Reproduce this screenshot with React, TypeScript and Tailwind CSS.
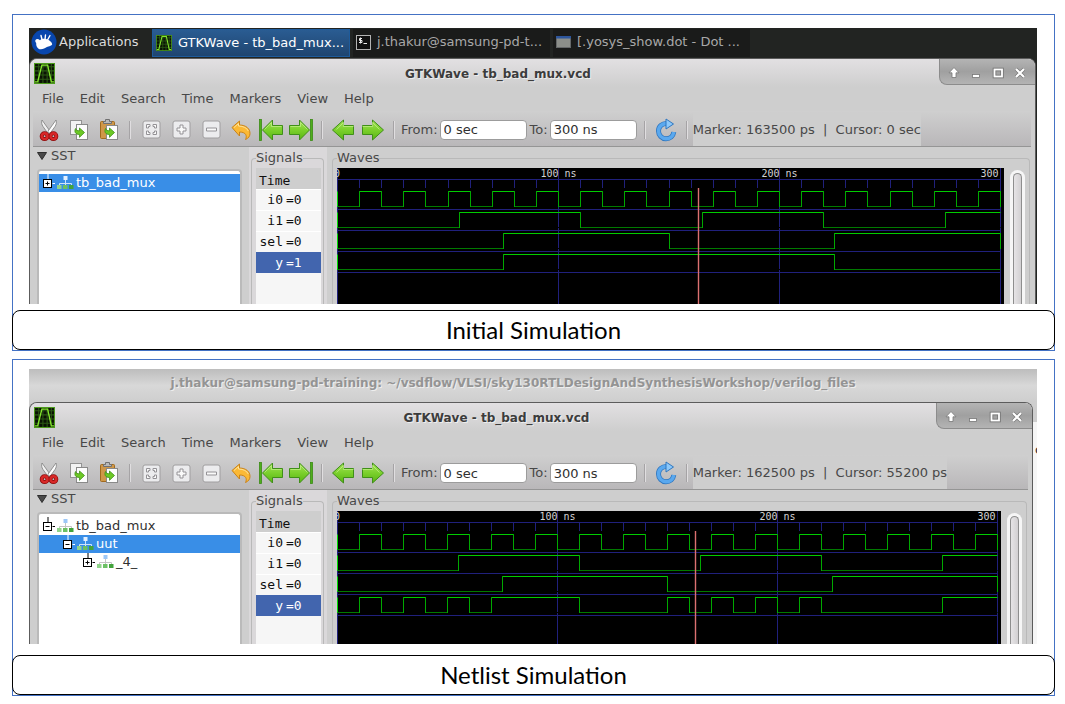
import React from "react";

type Span = [number, number];
interface Signal {
  name: string;
  value: string;
  high: Span[];
  edgeAtEnd?: boolean;
}
interface TreeNode {
  label: string;
  depth: number;
  open?: boolean;
  selected?: boolean;
}

const END = 300;
const clock: Span[] = Array.from({ length: 15 }, (_, i) => [10 + i * 20, 20 + i * 20]);
const i1: Span[] = [[55, 110], [165, 220], [275, 300]];
const sel: Span[] = [[75, 150], [225, 300]];

const initialSignals: Signal[] = [
  { name: "i0", value: "0", high: clock, edgeAtEnd: true },
  { name: "i1", value: "0", high: i1 },
  { name: "sel", value: "0", high: sel, edgeAtEnd: true },
  { name: "y", value: "1", high: [[75, 225]] },
];
const netlistSignals: Signal[] = [
  ...initialSignals.slice(0, 3),
  {
    name: "y",
    value: "0",
    high: [[10, 20], [30, 40], [50, 60], [70, 110], [150, 160], [170, 180], [190, 200], [210, 220], [275, 300]],
  },
];

/* ---------- icons ---------- */

function AppIcon({ className }: { className: string }) {
  return (
    <svg viewBox="0 0 20 20" className={className} aria-hidden="true">
      <rect width="20" height="20" fill="#0a1204" />
      <path d="M4.5 0v20M8.5 0v20M12.5 0v20M16.5 0v20M0 3.5h20M0 7.5h20M0 11.5h20M0 15.5h20" stroke="#2c5a14" fill="none" />
      <rect x=".5" y=".5" width="19" height="19" fill="none" stroke="#4c9a1c" />
      <path d="M1 18h2.500L7.500 2h5.500l3.500 16H19" stroke="#83e52c" strokeWidth="1.300" fill="none" />
    </svg>
  );
}

function MouseLogo() {
  return (
    <svg viewBox="0 0 26 26" className="size-[26px]" aria-hidden="true">
      <circle cx="13" cy="13" r="12.500" fill="#0846ad" />
      <path d="M4.500 11c1-1.500 3-1 4.500.200 1.500-1.400 5-1.900 7.500-.800 2 .900 4.600 2.600 4.700 4.800-.3 1.600-3.400 1.800-5.300 2.900-2.300 1.500-6.200 3.400-8.700 1.300C5 17.700 5.200 15.500 5.200 14c-.8-.8-1.300-2-.7-3z" fill="#fff" />
      <path d="M11 10.500L10 6.500M14 10.500l.500-4.500M16.500 11L19 6.500" stroke="#fff" strokeWidth="1.400" strokeLinecap="round" />
    </svg>
  );
}

function Arrow({ dir, bar }: { dir: "left" | "right"; bar?: boolean }) {
  const id = `arrow-${dir}-${bar ? "bar" : "plain"}`;
  return (
    <svg viewBox="0 0 26 24" className="h-6 w-[26px]" aria-hidden="true">
      <defs>
        <linearGradient id={id} x1="0" y1="0" x2="0" y2="1">
          <stop offset="0" stopColor="#a4e45a" />
          <stop offset=".5" stopColor="#7bd02c" />
          <stop offset="1" stopColor="#58b412" />
        </linearGradient>
      </defs>
      <g transform={dir === "left" ? undefined : "matrix(-1 0 0 1 26 0)"}>
        {bar && <rect x="1.500" y="1.500" width="2" height="21" fill="#4fae1c" stroke="#3b8a16" strokeWidth=".8" />}
        <path
          d={bar ? "M4.500 12L14.500 2v5.500h10v9h-10V22z" : "M2.500 12L13.500 2v5.500h10v9h-10V22z"}
          fill={`url(#${id})`}
          stroke="#3f8f18"
          strokeLinejoin="round"
        />
        <path d="M6.500 11.500l7-7v4h10" stroke="#c4f08a" strokeOpacity=".7" fill="none" />
      </g>
    </svg>
  );
}

function Scissors() {
  return (
    <svg viewBox="0 0 20 24" className="h-6 w-5" aria-hidden="true">
      <path d="M3 2c-.8 2.500-.3 4.500 1 6.500l5 7 2.200-2z" fill="#f1f1f1" stroke="#7d7d7d" strokeWidth=".8" />
      <path d="M17 2c.8 2.500.3 4.500-1 6.500l-5 7-2.200-2z" fill="#fff" stroke="#7d7d7d" strokeWidth=".8" />
      <circle cx="5.600" cy="18.200" r="2.900" fill="none" stroke="#8e0c0c" strokeWidth="4" />
      <circle cx="14.400" cy="18.200" r="2.900" fill="none" stroke="#8e0c0c" strokeWidth="4" />
      <circle cx="5.600" cy="18.200" r="2.900" fill="none" stroke="#d82828" strokeWidth="2.400" />
      <circle cx="14.400" cy="18.200" r="2.900" fill="none" stroke="#d82828" strokeWidth="2.400" />
    </svg>
  );
}

const greenHook = "M10.500 9.500c-1.500 3.500 0 6 4 6v2.800l5-4.800-5-4.500v2.800c-2.200 0-3.300-.5-4-2.300z";

function CopyIcon() {
  return (
    <svg viewBox="0 0 22 24" className="h-6 w-[22px]" aria-hidden="true">
      <rect x="2.500" y="2.500" width="11" height="14" fill="#f3f3f3" stroke="#939393" />
      <rect x="8.500" y="6.500" width="11" height="15" fill="#fdfdfd" stroke="#8a8a8a" />
      <path d={greenHook} transform="translate(-3 1)" fill="#6cc824" stroke="#3f8f18" strokeWidth=".8" />
    </svg>
  );
}

function PasteIcon() {
  return (
    <svg viewBox="0 0 22 24" className="h-6 w-[22px]" aria-hidden="true">
      <rect x="2.500" y="3.500" width="14" height="17" rx="1" fill="#cf9748" stroke="#a06a1e" />
      <path d="M5.500 5.500v-2h2v-2h4v2h2v2z" fill="#b9b9b9" stroke="#707070" />
      <rect x="8.500" y="7.500" width="11" height="14" fill="#fdfdfd" stroke="#8a8a8a" />
      <path d={greenHook} transform="translate(-3 1)" fill="#6cc824" stroke="#3f8f18" strokeWidth=".8" />
    </svg>
  );
}

function ZoomIcon({ kind }: { kind: "fit" | "in" | "out" }) {
  const shape = {
    fit: "M4.500 8V4.500H8v2H6.500V8zM11 4.500h3.500V8h-2V6.500H11zM4.500 11v3.500H8v-2H6.500V11zM11 14.500h3.500V11h-2v1.500H11z",
    in: "M8 5h3v3h3v3h-3v3H8v-3H5V8h3z",
    out: "M4.500 8h10v3h-10z",
  }[kind];
  return (
    <svg viewBox="0 0 19 19" className="size-[19px]" aria-hidden="true">
      <rect x="1" y="1" width="17" height="17" rx="2" fill="#ececee" stroke="#a09ea0" />
      <path d={shape} fill="#fafafa" stroke="#949296" />
    </svg>
  );
}

function UndoIcon() {
  return (
    <svg viewBox="0 0 20 22" className="h-[22px] w-5" aria-hidden="true">
      <path
        d="M1 8.500L8.500 2v4c6.500.200 10.500 3.500 10.500 8.500 0 2.500-1.500 4.800-4.500 6 1.800-3.500.500-7.500-6-7.500v4z"
        fill="#fbb936"
        stroke="#c9831a"
        strokeLinejoin="round"
      />
      <path d="M3 8.500l4.500-4V7c5 .2 8.500 2 9.800 5" fill="none" stroke="#ffe49a" />
    </svg>
  );
}

function ReloadIcon() {
  return (
    <svg viewBox="0 0 22 24" className="h-6 w-[22px]" aria-hidden="true">
      <path d="M12.500 5.500C7 5 3.500 8.500 3.500 13c0 4.200 3.300 7.700 7.500 7.700s7.200-2.700 7.800-6.700" fill="none" stroke="#2f76bf" strokeWidth="5" />
      <path d="M12.500 5.500C7 5 3.500 8.500 3.500 13c0 4.200 3.300 7.700 7.500 7.700s7.200-2.700 7.800-6.700" fill="none" stroke="#5aa8ee" strokeWidth="3.400" />
      <path d="M11 1l7.500 5L11 11z" fill="#8cc8fa" stroke="#2f76bf" strokeLinejoin="round" />
    </svg>
  );
}

function HierarchyIcon({ light }: { light?: boolean }) {
  return (
    <svg viewBox="0 0 17 14" className="h-3.5 w-[17px]" aria-hidden="true">
      <path d="M8.500 4v5M2.500 9.500V7.500h12v2" fill="none" stroke={light ? "#cfe3fa" : "#c4c4c4"} />
      <rect x="6.500" y="0" width="4" height="4" fill={light ? "#e3f0ff" : "#9cc7f7"} />
      <rect x="0" y="9" width="4.500" height="4" fill="#8fd48a" />
      <rect x="6" y="9" width="4.500" height="4" fill="#6cc064" />
      <rect x="12" y="9" width="4.500" height="4" fill="#43a33c" />
    </svg>
  );
}

function Expander({ open, light }: { open?: boolean; light?: boolean }) {
  return (
    <svg viewBox="0 0 12 18" className="h-[18px] w-3" aria-hidden="true">
      <path d="M5 0v5M9.500 9.500H12" stroke={light ? "#fff" : "#000"} fill="none" />
      <rect x=".5" y="5.500" width="8" height="8" fill="#fff" stroke="#000" />
      <path d={open ? "M2.500 9.500h4" : "M2.500 9.500h4M4.500 7.500v4"} stroke="#000" fill="none" />
    </svg>
  );
}

/* ---------- window parts ---------- */

function WindowControls() {
  const shapes: [string, React.ReactNode][] = [
    ["Roll up", <path key="u" d="M7 1.500L12 6.800H9v4.700H5V6.800H2z" fill="#fff" stroke="#777" strokeWidth=".8" />],
    ["Minimize", <rect key="m" x="3.500" y="8.500" width="7" height="3" fill="#fff" stroke="#777" strokeWidth=".8" />],
    [
      "Maximize",
      <g key="x" fill="none">
        <rect x="3.500" y="3.500" width="7.500" height="7" stroke="#777" strokeWidth="3.600" />
        <rect x="3.500" y="3.500" width="7.500" height="7" stroke="#fff" strokeWidth="1.800" />
      </g>,
    ],
    [
      "Close",
      <g key="c" fill="none">
        <path d="M3 3l8 8M11 3l-8 8" stroke="#777" strokeWidth="3.400" />
        <path d="M3 3l8 8M11 3l-8 8" stroke="#fff" strokeWidth="2.200" />
      </g>,
    ],
  ];
  return (
    <div className="flex h-[26px] w-24 items-center gap-2 rounded-bl-lg border-b border-l border-[#8c8c8c] bg-linear-to-b from-[#b4b4b4] via-[#a0a0a0] to-[#b4b4b4] pt-0.5 pl-[7px]">
      {shapes.map(([label, shape]) => (
        <button key={label} type="button" aria-label={label} className="size-3.5">
          <svg viewBox="0 0 14 14" className="size-3.5">
            {shape}
          </svg>
        </button>
      ))}
    </div>
  );
}

function ToolButton({ label, children }: { label: string; children: React.ReactNode }) {
  return (
    <button type="button" aria-label={label} className="flex w-[30px] shrink-0 items-center justify-center">
      {children}
    </button>
  );
}

function Separator() {
  return (
    <div className="flex w-3 shrink-0 items-center justify-center">
      <div className="h-[18px] w-0.5 border-l border-[#a5a3a5] bg-[#e0dee0]" />
    </div>
  );
}

function TimeField({ label, id, value }: { label: string; id: string; value: string }) {
  return (
    <div className="flex items-center gap-0.5">
      <label htmlFor={id}>{label}</label>
      <input
        id={id}
        defaultValue={value}
        className="h-5 w-[87px] rounded-sm border border-[#9c9c9c] bg-white px-[3px] text-[#303030] outline-none"
      />
    </div>
  );
}

function Toolbar({ id, status, className }: { id: string; status: string; className: string }) {
  return (
    <div className={`mr-1 ml-[3px] flex shrink-0 border-b border-[#959595] bg-linear-to-b from-[#cfcfcf] to-[#b9b7b9] pt-0.5 pl-px ${className}`}>
      <ToolButton label="Cut"><Scissors /></ToolButton>
      <ToolButton label="Copy"><CopyIcon /></ToolButton>
      <ToolButton label="Paste"><PasteIcon /></ToolButton>
      <Separator />
      <ToolButton label="Zoom fit"><ZoomIcon kind="fit" /></ToolButton>
      <ToolButton label="Zoom in"><ZoomIcon kind="in" /></ToolButton>
      <ToolButton label="Zoom out"><ZoomIcon kind="out" /></ToolButton>
      <ToolButton label="Undo zoom"><UndoIcon /></ToolButton>
      <ToolButton label="Go to start"><Arrow dir="left" bar /></ToolButton>
      <ToolButton label="Go to end"><Arrow dir="right" bar /></ToolButton>
      <Separator />
      <ToolButton label="Previous edge"><Arrow dir="left" /></ToolButton>
      <ToolButton label="Next edge"><Arrow dir="right" /></ToolButton>
      <Separator />
      <div className="flex items-center gap-[3px] pl-px">
        <TimeField label="From:" id={`${id}-from`} value="0 sec" />
        <TimeField label="To:" id={`${id}-to`} value="300 ns" />
      </div>
      <div className="flex pl-0.5">
        <Separator />
        <ToolButton label="Reload"><ReloadIcon /></ToolButton>
        <Separator />
      </div>
      <div className="flex items-center bg-[#cecece] whitespace-pre">{status}</div>
    </div>
  );
}

function Waves({ signals, pxPerNs, marker }: { signals: Signal[]; pxPerNs: number; marker: number }) {
  const x = (ns: number) => Math.round(ns * pxPerNs) + 0.5;
  const last = x(END);
  return (
    <svg className="block h-[136px]" width={last + 3.5} height="136" role="img" aria-label="Signal waveforms">
      <g stroke="#20207c" fill="none">
        <path d={`M0 11.5H${last}`} />
        {Array.from({ length: 29 }, (_, i) => (
          <path key={i} d={`M${x((i + 1) * 10)} 12V20`} />
        ))}
        {[0, 100, 200, 300].map((t) => (
          <path key={t} d={`M${x(t)} 0V136`} />
        ))}
        {signals.map((s, i) => (
          <path key={s.name} d={`M0 ${41.5 + i * 21}H${last}`} />
        ))}
      </g>
      {signals.map((s, i) => {
        const top = 23.5 + i * 21;
        const low = top + 15;
        const edges = s.high.flat().filter((t) => t < END);
        if (s.edgeAtEnd) edges.push(END);
        return (
          <g key={s.name} fill="none">
            <path d={`M0 ${low}H${last}`} stroke="#007a00" />
            {s.high.map(([a, b]) => (
              <g key={a}>
                <path d={`M${x(a)} ${low}H${x(b)}`} stroke="#000" />
                <path d={`M${x(a)} ${top}H${x(b)}`} stroke="#00cc00" />
              </g>
            ))}
            <path d={`M.5 ${top}V${low}`} stroke="#00dc00" />
            {edges.map((t) => (
              <path key={t} d={`M${x(t)} ${top - 0.5}V${low + 0.5}`} stroke="#00a800" />
            ))}
          </g>
        );
      })}
      <path d={`M${x(marker)} 20V136`} stroke="#dc7070" strokeWidth="1.4" />
      <g className="fill-[#d4d4d4] font-['DejaVu_Sans_Mono',monospace] text-[10px]">
        <text x="-3" y="9">0</text>
        <text x={x(100)} y="9" textAnchor="middle">100 ns</text>
        <text x={x(200)} y="9" textAnchor="middle">200 ns</text>
        <text x={last - 2} y="9" textAnchor="end">300</text>
      </g>
    </svg>
  );
}

function Frame({ title, className, children }: { title: string; className: string; children: React.ReactNode }) {
  return (
    <fieldset className={`min-w-0 rounded-t border border-b-0 border-[#b9b9b9] ${className}`}>
      <legend className="h-5 leading-5">{title}</legend>
      {children}
    </fieldset>
  );
}

interface GtkWaveProps {
  id: string;
  status: string;
  tree: TreeNode[];
  signals: Signal[];
  pxPerNs: number;
  marker: number;
  toolbarClass: string;
}

function GtkWave({ id, status, tree, signals, pxPerNs, marker, toolbarClass }: GtkWaveProps) {
  return (
    <section className="flex min-h-0 flex-1 flex-col overflow-hidden rounded-t-lg border border-b-0 border-[#5c5c5c] bg-[#cecece] text-[#484848]">
      <header className="flex h-7 shrink-0 bg-linear-to-b from-[#e2e0e2] to-[#cecece]">
        <div className="flex flex-1 items-center pl-1">
          <AppIcon className="size-[21px]" />
          <h2 className="flex-1 pt-0.5 pl-0.5 text-center text-[12px] font-bold text-[#3c3c3c] [text-shadow:1px_1px_0_#eee]">
            GTKWave - tb_bad_mux.vcd
          </h2>
        </div>
        <WindowControls />
      </header>
      <nav className="flex h-6 shrink-0 items-center gap-4 pl-3">
        {["File", "Edit", "Search", "Time", "Markers", "View", "Help"].map((m) => (
          <button key={m} type="button">{m}</button>
        ))}
      </nav>
      <Toolbar id={id} status={status} className={toolbarClass} />
      <div className="flex min-h-0 flex-1">
        <div className="flex w-[219px] shrink-0 flex-col px-[7px]">
          <div className="flex h-[22px] items-center gap-1 pb-1">
            <svg viewBox="0 0 10 8" className="h-2 w-2.5" aria-hidden="true">
              <path d="M.5.5h9L5 7.500z" fill="#4a4a4a" stroke="#2e2e2e" />
            </svg>
            SST
          </div>
          <ul className="flex-1 rounded-t-sm border-2 border-b-0 border-[#bababa] bg-white pt-[3px]">
            {tree.map((n) => (
              <li key={n.label} className={`flex h-[18px] items-center ${n.selected ? "bg-[#398ee7] text-white" : "text-[#303030]"}`}>
                <span className="flex items-center gap-0.5 pl-1" style={{ marginLeft: n.depth * 20 }}>
                  <Expander open={n.open} light={n.selected} />
                  <HierarchyIcon light={n.selected} />
                  {n.label}
                </span>
              </li>
            ))}
          </ul>
        </div>
        <div className="flex w-[78px] shrink-0 bg-[#dad8da] pt-px pr-[3px] pl-0.5">
          <Frame title="Signals" className="w-full pr-0.5 pl-1">
            <div className="h-full bg-[#f6f6f6] font-['DejaVu_Sans_Mono',monospace] text-[#101010]">
              <div className="h-[21px] bg-[#cecece] pt-[5px] pl-[3px] leading-4">Time</div>
              {signals.map((s) => (
                <div
                  key={s.name}
                  className={`flex h-[21px] items-center gap-[3px] border-t pl-[3px] ${
                    s.name === "y" ? "border-[#4265ae] bg-[#4265ae] text-white" : "border-white"
                  }`}
                >
                  <span className="w-6 text-right">{s.name}</span>
                  <span>={s.value}</span>
                </div>
              ))}
            </div>
          </Frame>
        </div>
        <div className="flex min-w-0 flex-1 pt-px pr-[5px] pl-[5px]">
          <Frame title="Waves" className="w-full px-1">
            <div className="flex h-full gap-1.5">
              <div className="min-w-0 flex-1 overflow-hidden bg-black">
                <Waves signals={signals} pxPerNs={pxPerNs} marker={marker} />
              </div>
              <div className="mt-0.5 w-[15px] rounded-t-full bg-[#f6f6f6] px-[3px] pt-[3px]">
                <div className="h-full rounded-t-full border border-b-0 border-[#8e8e8e] bg-linear-to-r from-[#e6e4e6] to-[#d2d0d2]" />
              </div>
            </div>
          </Frame>
        </div>
      </div>
    </section>
  );
}

function Taskbar() {
  return (
    <div className="flex h-[30px] shrink-0 items-center bg-[#222422] text-[#dcdcdc]">
      <button type="button" className="flex w-[123px] items-center gap-0.5 pb-0.5 pl-0.5">
        <MouseLogo />
        Applications
      </button>
      <button type="button" className="flex h-7 w-[198px] items-center gap-1.5 border border-[#1d5b9c] bg-linear-to-b from-[#2a5c92] to-[#1f4570] pl-[3px] text-white">
        <AppIcon className="size-4" />
        GTKWave - tb_bad_mux...
      </button>
      <button type="button" className="ml-[3px] flex h-7 w-[197px] items-center gap-1.5 bg-[#1a1b1a] pb-0.5 pl-[3px] text-[#a8a8a8]">
        <svg viewBox="0 0 15 15" className="size-[15px]" aria-hidden="true">
          <rect x=".5" y=".5" width="14" height="14" fill="#111" stroke="#b4b4b4" />
          <path d="M6 3.500H3.500v2H6v2H3M4.500 2.500v6M7.500 8.500H11" stroke="#eee" fill="none" />
        </svg>
        j.thakur@samsung-pd-t...
      </button>
      <button type="button" className="ml-[3px] flex h-7 w-[197px] items-center gap-1.5 bg-[#1a1b1a] pb-0.5 pl-[3px] text-[#a8a8a8]">
        <svg viewBox="0 0 15 12" className="h-3 w-[15px]" aria-hidden="true">
          <rect x=".5" y=".5" width="14" height="11" fill="#8c8f8a" stroke="#66696a" />
          <rect width="15" height="2.500" fill="#2d569c" />
        </svg>
        [.yosys_show.dot - Dot ...
      </button>
    </div>
  );
}

function Figure({ caption, className, gap, children }: { caption: string; className: string; gap: string; children: React.ReactNode }) {
  return (
    <figure className={`border border-[#4472c4] ${className}`}>
      <div className="mr-[17px] ml-4">{children}</div>
      <figcaption className={`-mx-px h-10 rounded-lg border border-black bg-white text-center font-['Lato',sans-serif] text-[24px] leading-[38px] text-black ${gap}`}>
        {caption}
      </figcaption>
    </figure>
  );
}

export default function App() {
  return (
    <main className="flex flex-col gap-2 bg-white pt-3.5 pr-2.5 pb-2 pl-3 font-['DejaVu_Sans',sans-serif] text-[13px] leading-4">
      <Figure caption="Initial Simulation" className="pt-[13px]" gap="mt-1.5">
        <div className="flex h-[276px] flex-col overflow-hidden bg-[#222422]">
          <Taskbar />
          <div className="flex min-h-0 flex-1 pr-px">
            <GtkWave
              id="initial"
              status="Marker: 163500 ps  |  Cursor: 0 sec"
              tree={[{ label: "tb_bad_mux", depth: 0, selected: true }]}
              signals={initialSignals}
              pxPerNs={2.21}
              marker={163.5}
              toolbarClass="h-9"
            />
          </div>
        </div>
      </Figure>
      <Figure caption="Netlist Simulation" className="pt-[9px]" gap="mt-[11px]">
        <div className="flex h-[275px] flex-col overflow-hidden bg-[#cecece]">
          <div className="flex h-[33px] shrink-0 items-center justify-center bg-linear-to-b from-[#bdbdbd] via-[#d8d8d8] to-[#cecece] pr-10 pb-1.5 text-[12px] font-bold text-[#949494] [text-shadow:1px_1px_0_#eee]">
            j.thakur@samsung-pd-training: ~/vsdflow/VLSI/sky130RTLDesignAndSynthesisWorkshop/verilog_files
          </div>
          <div className="flex min-h-0 flex-1">
            <GtkWave
              id="netlist"
              status="Marker: 162500 ps  |  Cursor: 55200 ps"
              tree={[
                { label: "tb_bad_mux", depth: 0, open: true },
                { label: "uut", depth: 1, open: true, selected: true },
                { label: "_4_", depth: 2 },
              ]}
              signals={netlistSignals}
              pxPerNs={2.2}
              marker={162.5}
              toolbarClass="h-[35px]"
            />
            <div className="w-1 overflow-hidden pt-5">
              <div className="h-full bg-[#f6f6f6] pt-5 pl-0.5 text-[#303030]">o</div>
            </div>
          </div>
        </div>
      </Figure>
    </main>
  );
}
